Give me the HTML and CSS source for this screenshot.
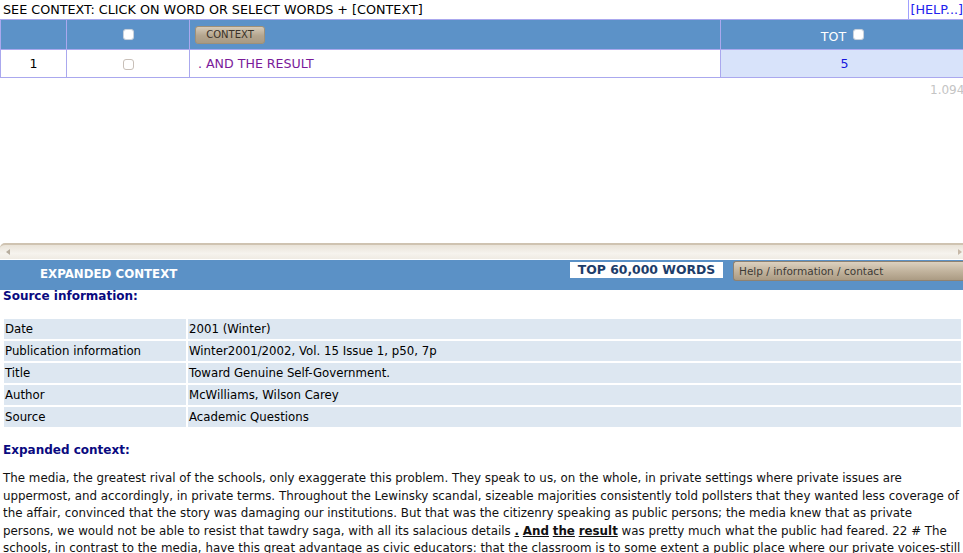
FILE: index.html
```html
<!DOCTYPE html>
<html>
<head>
<meta charset="utf-8">
<link rel="stylesheet" href="styles.css">
</head>
<body>
<div class="topframe">
  <div class="topline">
    <span>SEE CONTEXT: CLICK ON WORD OR SELECT WORDS + [CONTEXT]</span>
    <a class="help" href="#">[HELP...]</a>
  </div>
  <table class="kwic">
    <colgroup>
      <col class="w1"><col class="w2"><col class="w3"><col class="w4">
    </colgroup>
    <tr class="head">
      <td class="c1"></td>
      <td class="c2"><span class="chk chk-head"></span></td>
      <td class="c3"><span class="btn-context">CONTEXT</span></td>
      <td class="c4"><span class="tot-label">TOT</span> <span class="chk chk-head"></span></td>
    </tr>
    <tr class="row">
      <td class="c1">1</td>
      <td class="c2"><span class="chk chk-row"></span></td>
      <td class="c3"><a class="phrase" href="#">. AND THE RESULT</a></td>
      <td class="c4 tot"><a href="#">5</a></td>
    </tr>
  </table>
  <div class="timing">1.094</div>
</div>
<div class="hscroll">
  <span class="arr arr-l"></span>
  <span class="arr arr-r"></span>
</div>
<div class="bottomframe">
  <div class="bar">
    <span class="bar-title">EXPANDED CONTEXT</span>
    <span class="top-words">TOP 60,000 WORDS</span>
    <span class="btn-help">Help / information / contact</span>
  </div>
  <div class="sec-title">Source information:</div>
  <table class="src">
    <tr><td class="k">Date</td><td>2001 (Winter)</td></tr>
    <tr><td class="k">Publication information</td><td>Winter2001/2002, Vol. 15 Issue 1, p50, 7p</td></tr>
    <tr><td class="k">Title</td><td>Toward Genuine Self-Government.</td></tr>
    <tr><td class="k">Author</td><td>McWilliams, Wilson Carey</td></tr>
    <tr><td class="k">Source</td><td>Academic Questions</td></tr>
  </table>
  <div class="sec-title sec-exp">Expanded context:</div>
  <p class="text">The media, the greatest rival of the schools, only exaggerate this problem. They speak to us, on the whole, in private settings where private issues are uppermost, and accordingly, in private terms. Throughout the Lewinsky scandal, sizeable majorities consistently told pollsters that they wanted less coverage of the affair, convinced that the story was damaging our institutions. But that was the citizenry speaking as public persons; the media knew that as private persons, we would not be able to resist that tawdry saga, with all its salacious details <b><u>.</u></b> <b><u>And</u></b> <b><u>the</u></b> <b><u>result</u></b> was pretty much what the public had feared. 22 # The schools, in contrast to the media, have this great advantage as civic educators: that the classroom is to some extent a public place where our private voices-still are muted.</p>
</div>
</body>
</html>
```

FILE: styles.css
```css
html, body {
  margin: 0;
  padding: 0;
  overflow: hidden;
  width: 963px;
  height: 553px;
  font-family: "DejaVu Sans", Verdana, sans-serif;
  font-size: 12px;
  color: #000;
  background: #fff;
}

.topframe {
  height: 243px;
  overflow: hidden;
  position: relative;
}

.topline {
  display: flex;
  justify-content: space-between;
  align-items: center;
  height: 19px;
  padding: 0 2px 0 3px;
  font-size: 12.75px;
  line-height: 19px;
}

.help {
  color: #2222ee;
  text-decoration: none;
  border-left: 1px solid #a0a0ff;
  padding-left: 1px;
  margin-right: -2px;
}

.kwic {
  border-collapse: collapse;
  width: 968px;
  table-layout: fixed;
  font-size: 12.6px;
}

.kwic .w1 { width: 66px; }
.kwic .w2 { width: 123px; }
.kwic .w3 { width: 531px; }
.kwic .w4 { width: 248px; }

.kwic td {
  border: 1px solid #aaa8ee;
  padding: 0;
  line-height: 14px;
}

.kwic .c1 { text-align: center; }
.kwic .c2 { text-align: center; }
.kwic .c3 { padding-left: 8px; }
.kwic .c4 { text-align: center; }

.kwic .head td {
  background: #5c92c8;
  height: 29px;
  color: #fff;
}

.tot-label {
  position: relative;
  top: 2px;
  margin-left: -4px;
}

.kwic .row td {
  height: 27px;
  background: #fff;
}

.kwic .row .tot { background: #d8e3fa; }
.kwic .row .tot a { color: #1515dd; text-decoration: none; }

.phrase {
  color: #7a1a9a;
  text-decoration: none;
}

.chk {
  display: inline-block;
  width: 11px;
  height: 11px;
  border-radius: 3px;
  vertical-align: middle;
  box-sizing: border-box;
}

.chk-head {
  background: #fff;
  border: 1px solid #c9d2dc;
  box-shadow: 0 0 1px #8fa6c0;
}

.kwic .c4 .chk-head { position: relative; top: -1px; margin-left: 3px; }
.kwic .c2 .chk-head { position: relative; top: -1px; }

.chk-row {
  background: #fff;
  border: 1px solid #c8bfb8;
}

.btn-context {
  display: inline-block;
  width: 70px;
  height: 18px;
  line-height: 16px;
  box-sizing: border-box;
  text-align: center;
  font-size: 10px;
  color: #3a3228;
  border: 1px solid #9e9078;
  border-radius: 3px;
  background: linear-gradient(#d6cbb9, #b4a58e 55%, #a99a83);
  margin-left: -3px;
  vertical-align: middle;
}

.timing {
  position: absolute;
  left: 930px;
  top: 83px;
  color: #c4c4c4;
  font-size: 12px;
  white-space: nowrap;
}

.hscroll {
  position: relative;
  height: 16px;
  box-sizing: border-box;
  border-top: 2px solid #cfc3b1;
  border-radius: 5px 0 0 0;
  background: linear-gradient(#e9e3d8, #f6f3ee 60%, #efebe3);
}

.arr {
  position: absolute;
  top: 4px;
  width: 0;
  height: 0;
  border-top: 3px solid transparent;
  border-bottom: 3px solid transparent;
}

.arr-l { left: 6px; border-right: 4px solid #b7ad9e; }
.arr-r { right: 1px; border-left: 4px solid #c7b9a8; }

.bottomframe {
  border-top: 1px solid #ffffff;
}

.bar {
  height: 30px;
  background: #5b91c6;
  display: flex;
  align-items: flex-start;
}

.bar-title {
  color: #fff;
  font-weight: bold;
  font-size: 11.8px;
  margin: 7px 0 0 40px;
  width: 140px;
  white-space: nowrap;
  line-height: 15px;
}

.top-words {
  margin: 2px 0 0 390px;
  background: #fff;
  color: #1d3d6a;
  font-weight: bold;
  font-size: 12.4px;
  width: 153px;
  height: 16px;
  line-height: 16px;
  text-align: center;
  white-space: nowrap;
}

.btn-help {
  margin: 1px 0 0 10px;
  flex: 1;
  height: 20px;
  line-height: 18px;
  box-sizing: border-box;
  padding-left: 5px;
  font-size: 10.5px;
  color: #3d3a36;
  border: 1px solid #8f8271;
  border-right: none;
  border-radius: 3px 0 0 3px;
  background: linear-gradient(#dcd1c0, #c2b49e 50%, #ab9b83);
  white-space: nowrap;
}

.sec-title {
  color: #0a0a80;
  font-weight: bold;
  font-size: 12px;
  padding-left: 3px;
  line-height: 12px;
  margin-top: 0;
}

.src {
  margin: 15px 0 0 2px;
  width: 961px;
  border-spacing: 2px 2px;
  border-collapse: separate;
  font-size: 11.75px;
}

.src td {
  background: #dde7f1;
  height: 20px;
  padding: 0 1px;
  line-height: 14px;
}

.src td.k { width: 180px; }

.sec-exp {
  margin-top: 15px;
}

.text {
  margin: 14px 0 0 3px;
  font-size: 11.87px;
  line-height: 17.6px;
  color: #111;
}

.text b u { text-decoration-thickness: 1px; }
```
